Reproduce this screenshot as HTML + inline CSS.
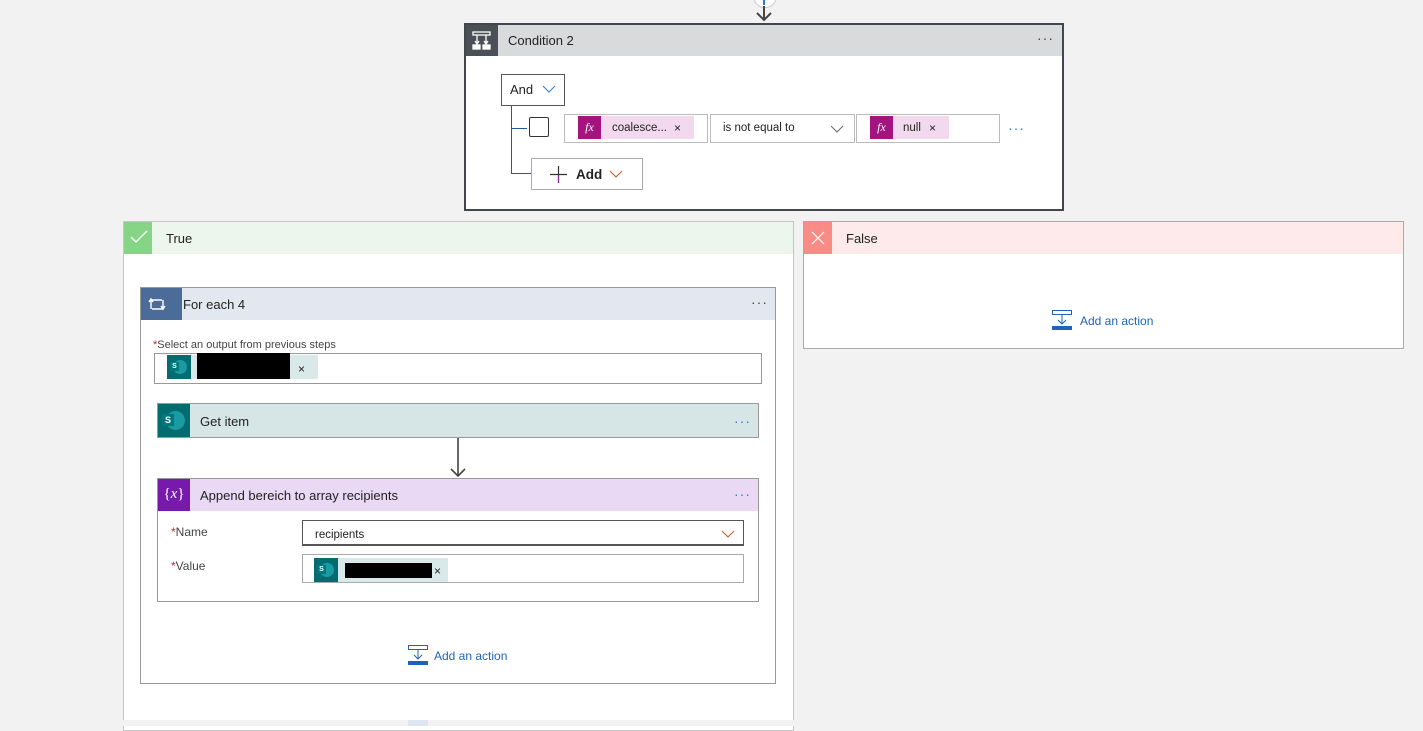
<!DOCTYPE html>
<html><head><meta charset="utf-8"><style>
*{box-sizing:border-box;margin:0;padding:0}
body{width:1423px;height:726px;background:#f2f2f2;font-family:"Liberation Sans",sans-serif;color:#222;position:relative;overflow:hidden;font-size:13px}
.a{position:absolute}
.dots{position:absolute;font-size:14px;letter-spacing:1px;color:#444}
.hdr{position:absolute;display:flex;align-items:center}
</style></head><body>

<!-- top connector -->
<div class="a" style="left:754px;top:-10px;width:22px;height:18px;border-radius:50%;background:#fff;border:1px solid #ccc"></div>
<div class="a" style="left:763px;top:0;width:2px;height:5px;background:#2b7bd0"></div>
<svg class="a" style="left:754px;top:6px" width="20" height="16"><path d="M10 0V14M3 7L10 14L17 7" stroke="#444" stroke-width="2" fill="none"/></svg>

<!-- Condition -->
<div class="a" style="left:464px;top:23px;width:600px;height:188px;background:#fff;border:2px solid #43474d"></div>
<div class="a" style="left:466px;top:25px;width:596px;height:31px;background:#d9dadb"></div>
<div class="a" style="left:466px;top:25px;width:32px;height:31px;background:#4b5058"></div>
<svg class="a" style="left:472px;top:31px" width="20" height="20"><g stroke="#fff" fill="none" stroke-width="1.3"><rect x="1" y="1" width="17" height="3"/><path d="M5 4V13M14 4V13M3 10L5 13L7 10M12 10L14 13L16 10"/><rect x="1" y="14" width="7" height="4" fill="#fff"/><rect x="11" y="14" width="7" height="4" fill="#fff"/></g></svg>
<div class="a" style="left:508px;top:33px;font-size:13px">Condition 2</div>
<div class="dots" style="left:1037px;top:30px">···</div>

<div class="a" style="left:501px;top:74px;width:64px;height:32px;border:1px solid #555;background:#fff"></div>
<div class="a" style="left:510px;top:82px;font-size:13px">And</div>
<svg class="a" style="left:542px;top:85px" width="14" height="8"><path d="M1 1L7 7L13 1" stroke="#2b7bd0" fill="none"/></svg>
<div class="a" style="left:511px;top:106px;width:1px;height:68px;background:#2b5797"></div>
<div class="a" style="left:511px;top:128px;width:16px;height:1px;background:#2b5797"></div>
<div class="a" style="left:511px;top:173px;width:20px;height:1px;background:#2b5797"></div>
<div class="a" style="left:529px;top:117px;width:20px;height:20px;border:1px solid #333;border-radius:2px;background:#fff"></div>

<div class="a" style="left:564px;top:114px;width:144px;height:29px;border:1px solid #bbb;background:#fff"></div>
<div class="a" style="left:578px;top:116px;width:116px;height:23px;background:#f2d9ee"></div>
<div class="a" style="left:578px;top:116px;width:23px;height:23px;background:#a4147e;color:#fff;font-family:'Liberation Serif',serif;font-style:italic;font-size:12px;text-align:center;line-height:23px">fx</div>
<div class="a" style="left:612px;top:122px;font-size:11.5px">coalesce...</div>
<div class="a" style="left:674px;top:121px;font-size:12px">×</div>

<div class="a" style="left:710px;top:114px;width:145px;height:29px;border:1px solid #bbb;background:#fff"></div>
<div class="a" style="left:723px;top:122px;font-size:11.5px">is not equal to</div>
<svg class="a" style="left:830px;top:125px" width="14" height="8"><path d="M1 1L7 7L13 1" stroke="#666" fill="none"/></svg>

<div class="a" style="left:856px;top:114px;width:144px;height:29px;border:1px solid #bbb;background:#fff"></div>
<div class="a" style="left:870px;top:116px;width:79px;height:23px;background:#f2d9ee"></div>
<div class="a" style="left:870px;top:116px;width:23px;height:23px;background:#a4147e;color:#fff;font-family:'Liberation Serif',serif;font-style:italic;font-size:12px;text-align:center;line-height:23px">fx</div>
<div class="a" style="left:903px;top:122px;font-size:11.5px">null</div>
<div class="a" style="left:929px;top:121px;font-size:12px">×</div>
<div class="dots" style="left:1008px;top:120px;color:#2b7bd0">···</div>

<div class="a" style="left:531px;top:158px;width:112px;height:32px;border:1px solid #aaa;background:#fff"></div>
<svg class="a" style="left:550px;top:166px" width="17" height="17"><path d="M8.5 0V17M0 8.5H17" stroke="#333" stroke-width="1.2"/><path d="M8.5 9V17" stroke="#8a2a8a" stroke-width="1.2"/></svg>
<div class="a" style="left:576px;top:167px;font-size:13.5px;font-weight:bold">Add</div>
<svg class="a" style="left:609px;top:170px" width="14" height="8"><path d="M1 1L7 7L13 1" stroke="#c8551f" fill="none"/></svg>

<!-- True -->
<div class="a" style="left:123px;top:221px;width:671px;height:510px;background:#fff;border:1px solid #c6c6c6"></div>
<div class="a" style="left:124px;top:222px;width:669px;height:32px;background:#ecf6ec"></div>
<div class="a" style="left:124px;top:222px;width:28px;height:32px;background:#86d587"></div>
<svg class="a" style="left:130px;top:230px" width="18" height="14"><path d="M1 7L6 12L17 1" stroke="#fff" stroke-width="1.3" fill="none"/></svg>
<div class="a" style="left:166px;top:231px">True</div>
<div class="a" style="left:0;top:720px;width:1423px;height:6px;background:#f2f2f2"></div>
<div class="a" style="left:408px;top:720px;width:20px;height:6px;background:#dde6f2"></div>

<!-- For each -->
<div class="a" style="left:140px;top:287px;width:636px;height:397px;background:#fff;border:1px solid #999"></div>
<div class="a" style="left:141px;top:288px;width:634px;height:32px;background:#e3e8f0"></div>
<div class="a" style="left:141px;top:288px;width:41px;height:32px;background:#4b6b99"></div>
<svg class="a" style="left:148px;top:296px" width="18" height="16"><g stroke="#fff" fill="none" stroke-width="1.4"><path d="M14 4H3V13M1 6L3 3L5 6"/><path d="M4 13H15V4M13 10L15 13L17 10"/></g></svg>
<div class="a" style="left:183px;top:297px">For each 4</div>
<div class="dots" style="left:751px;top:294px">···</div>

<div class="a" style="left:153px;top:339px;font-size:11px;color:#444"><span style="color:#c4262e">*</span>Select an output from previous steps</div>
<div class="a" style="left:154px;top:353px;width:608px;height:31px;border:1px solid #999;background:#fff"></div>
<div class="a" style="left:167px;top:355px;width:151px;height:24px;background:#d9e8e8"></div>
<div class="a" style="left:167px;top:355px;width:24px;height:24px;background:#036c70"></div>
<div class="a" style="left:173px;top:360px;width:14px;height:14px;border-radius:50%;background:#1a9ba1"></div>
<div class="a" style="left:170px;top:362px;width:9px;height:9px;background:#03787c;color:#fff;font-size:7px;line-height:9px;text-align:center;font-weight:bold">S</div>
<div class="a" style="left:197px;top:353px;width:93px;height:26px;background:#000"></div>
<div class="a" style="left:298px;top:362px;font-size:12px">×</div>

<!-- Get item -->
<div class="a" style="left:157px;top:403px;width:602px;height:35px;background:#d6e6e6;border:1px solid #999"></div>
<div class="a" style="left:158px;top:404px;width:32px;height:33px;background:#036c70"></div>
<div class="a" style="left:166px;top:411px;width:19px;height:19px;border-radius:50%;background:#1a9ba1"></div>
<div class="a" style="left:162px;top:414px;width:12px;height:12px;background:#03787c;color:#fff;font-size:9px;line-height:12px;text-align:center;font-weight:bold">S</div>
<div class="a" style="left:200px;top:414px">Get item</div>
<div class="dots" style="left:734px;top:413px;color:#2b7bd0">···</div>

<svg class="a" style="left:448px;top:438px" width="20" height="40"><path d="M10 0V38M3 31L10 38L17 31" stroke="#444" stroke-width="1.6" fill="none"/></svg>

<!-- Append -->
<div class="a" style="left:157px;top:478px;width:602px;height:124px;background:#fff;border:1px solid #999"></div>
<div class="a" style="left:158px;top:479px;width:600px;height:32px;background:#e9d9f5"></div>
<div class="a" style="left:158px;top:479px;width:32px;height:32px;background:#7719aa;color:#fff;font-family:'Liberation Serif',serif;font-size:15px;text-align:center;line-height:31px">{<i>x</i>}</div>
<div class="a" style="left:200px;top:488px">Append bereich to array recipients</div>
<div class="dots" style="left:734px;top:486px;color:#2b7bd0">···</div>

<div class="a" style="left:171px;top:525px;font-size:12px;color:#444"><span style="color:#c4262e">*</span>Name</div>
<div class="a" style="left:302px;top:520px;width:442px;height:26px;border:1px solid #555;border-bottom-width:2px;background:#fff"></div>
<div class="a" style="left:315px;top:529px;font-size:11.5px">recipients</div>
<svg class="a" style="left:721px;top:530px" width="14" height="8"><path d="M1 1L7 7L13 1" stroke="#c8551f" fill="none"/></svg>

<div class="a" style="left:171px;top:559px;font-size:12px;color:#444"><span style="color:#c4262e">*</span>Value</div>
<div class="a" style="left:302px;top:554px;width:442px;height:29px;border:1px solid #aaa;background:#fff"></div>
<div class="a" style="left:314px;top:558px;width:134px;height:24px;background:#d9e8e8"></div>
<div class="a" style="left:314px;top:558px;width:24px;height:24px;background:#036c70"></div>
<div class="a" style="left:320px;top:563px;width:14px;height:14px;border-radius:50%;background:#1a9ba1"></div>
<div class="a" style="left:317px;top:565px;width:9px;height:9px;background:#03787c;color:#fff;font-size:7px;line-height:9px;text-align:center;font-weight:bold">S</div>
<div class="a" style="left:345px;top:563px;width:87px;height:15px;background:#000"></div>
<div class="a" style="left:434px;top:564px;font-size:12px">×</div>

<!-- add action true -->
<svg class="a" style="left:408px;top:645px" width="20" height="20"><rect x="0.5" y="0.5" width="19" height="4" fill="none" stroke="#1e63b8"/><path d="M10 5V14M6 10L10 14L14 10" stroke="#1e63b8" fill="none"/><rect x="0" y="16" width="20" height="4" fill="#1e63b8"/></svg>
<div class="a" style="left:434px;top:649px;font-size:12px;color:#1e63b8">Add an action</div>

<!-- False -->
<div class="a" style="left:803px;top:221px;width:601px;height:128px;background:#fff;border:1px solid #aaa"></div>
<div class="a" style="left:804px;top:222px;width:599px;height:32px;background:#feeaea"></div>
<div class="a" style="left:804px;top:222px;width:28px;height:32px;background:#f88b86"></div>
<svg class="a" style="left:811px;top:231px" width="14" height="14"><path d="M1 1L13 13M13 1L1 13" stroke="#fff" stroke-width="1.2"/></svg>
<div class="a" style="left:846px;top:231px">False</div>
<svg class="a" style="left:1052px;top:310px" width="20" height="20"><rect x="0.5" y="0.5" width="19" height="4" fill="none" stroke="#1e63b8"/><path d="M10 5V14M6 10L10 14L14 10" stroke="#1e63b8" fill="none"/><rect x="0" y="16" width="20" height="4" fill="#1e63b8"/></svg>
<div class="a" style="left:1080px;top:314px;font-size:12px;color:#1e63b8">Add an action</div>

</body></html>
